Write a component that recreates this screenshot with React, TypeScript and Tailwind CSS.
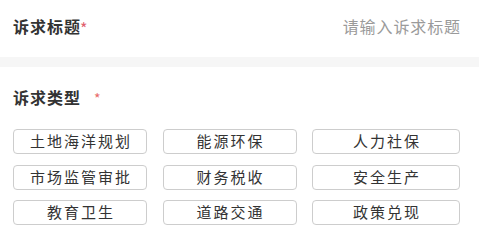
import React from 'react';

const types = [
  '土地海洋规划',
  '能源环保',
  '人力社保',
  '市场监管审批',
  '财务税收',
  '安全生产',
  '教育卫生',
  '道路交通',
  '政策兑现',
];

const font = "font-['Noto_Sans_CJK_SC','Noto_Sans',sans-serif]";

export default function App() {
  return (
    <div className={`w-[479px] h-[251px] bg-white overflow-hidden ${font}`}>
      {/* title input row */}
      <div className="h-[57px] pb-[6px] pl-[13px] pr-[18px] flex items-center justify-between">
        <div className="flex items-center">
          <span className="text-[16px] leading-[22px] font-bold text-[#333333] tracking-[1px]">诉求标题</span>
          <span className="text-[16px] leading-[16px] text-[#e0606e] ml-[-1px] mt-[4px]">*</span>
        </div>
        <span className="text-[16px] leading-[22px] text-[#9a9a9a] tracking-[0.9px]">请输入诉求标题</span>
      </div>

      <div className="h-[10px] bg-[#f6f6f6]" />

      {/* type selection */}
      <div className="pt-[19px] px-[13px]">
        <div className="flex items-center h-[22px]">
          <span className="text-[16px] leading-[22px] font-bold text-[#333333] tracking-[1px]">诉求类型</span>
          <span className="text-[14px] leading-[14px] text-[#e86a6a] ml-[13px] mt-[1px]">*</span>
        </div>
        <div className="mt-[21px] grid grid-cols-[134px_134px_148px] gap-x-[15.5px] gap-y-[10.5px]">
          {types.map((t) => (
            <div
              key={t}
              className="h-[25px] border border-[#cdcdcd] rounded-[4px] flex items-center justify-center text-[15px] text-[#333333] tracking-[2px]"
            >
              <span className="mr-[-2px]">{t}</span>
            </div>
          ))}
        </div>
      </div>
    </div>
  );
}
